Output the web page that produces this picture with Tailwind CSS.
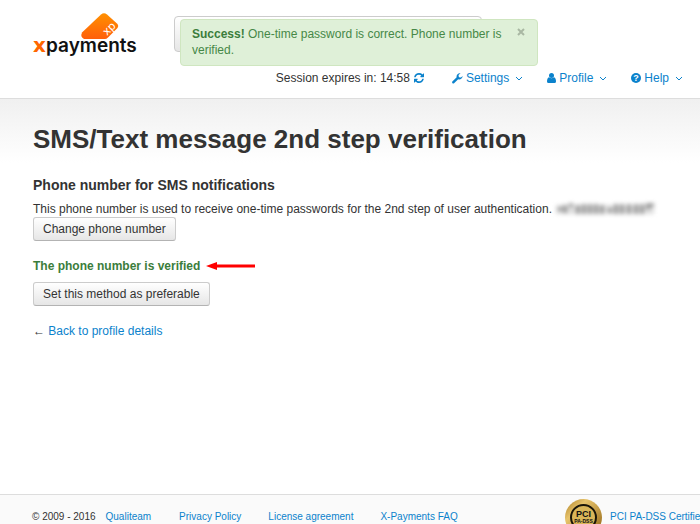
<!DOCTYPE html>
<html lang="en">
<head>
    <meta charset="UTF-8">
    <meta name="viewport" content="width=device-width, initial-scale=1.0">
    <title>SMS/Text message 2nd step verification</title>
    <script src="https://cdn.jsdelivr.net/npm/@tailwindcss/browser@4"></script>
</head>
<body class="flex h-screen flex-col overflow-hidden bg-white font-['Liberation_Sans',Arial,sans-serif] text-[12px] leading-4 text-[#333]">
    <!-- Header -->
    <header class="relative h-[99px] shrink-0 border-b border-[#ddd] bg-white pt-3 pl-8">
        <div class="flex items-start">
            <a href="#" class="block w-[142px]" aria-label="xpayments">
                <svg class="h-[46px] w-[110px]" viewBox="0 0 110 46">
                    <defs>
                        <linearGradient id="card" x1="0" y1="0" x2="0" y2="1">
                            <stop offset="0" stop-color="#ff9000"/>
                            <stop offset="1" stop-color="#ff5f0a"/>
                        </linearGradient>
                    </defs>
                    <path d="M50 20.500 69 2.500q3-2.500 6 0l10.500 9.500q1.500 2 0 4L76 25.500q-1.500 1.500-3 1.500H52q-4-2-2-6.500Z" fill="url(#card)"/>
                    <text transform="translate(75 24) rotate(-45)" font-family="DejaVu Sans" font-size="11" fill="#fff">xp</text>
                    <text y="40" font-family="Inter" font-size="19" font-weight="600" fill="#111"><tspan x="1" font-family="DejaVu Sans" font-size="20" font-weight="bold" fill="#f60">x</tspan><tspan x="14">payments</tspan></text>
                </svg>
            </a>
            <input type="search" aria-label="Search" class="mt-1 h-9 w-[308px] rounded-sm border border-[#ccc] bg-linear-to-b from-white to-[#e6e6e6]">
        </div>
        <nav class="mt-3 flex items-center justify-end pr-[17px] text-[#0b82cc]">
            <span class="mr-7 flex items-center gap-1 text-[#333]">Session expires in: 14:58
                <button type="button" aria-label="Refresh" class="text-[#0b82cc]">
                    <svg class="size-[10px]" viewBox="0 0 1536 1536" fill="currentColor"><path d="M1511 928q0 5-1 7-64 268-268 434.500T764 1536q-146 0-282.500-55T238 1324l-129 129q-19 19-45 19t-45-19-19-45V960q0-26 19-45t45-19h448q26 0 45 19t19 45-19 45l-137 137q71 66 161 102t187 36q134 0 250-65t186-179q11-17 53-117 8-23 30-23h192q13 0 22.500 9.500t9.500 22.500zm25-800v448q0 26-19 45t-45 19h-448q-26 0-45-19t-19-45 19-45l138-138Q969 256 768 256q-134 0-250 65T332 500q-11 17-53 117-8 23-30 23H50q-13 0-22.500-9.500T18 608v-7q65-268 270-434.500T768 0q146 0 284 55.500T1297 212l130-129q19-19 45-19t45 19 19 45z"/></svg>
                </button>
            </span>
            <a href="#" class="mr-6 flex items-center gap-[3px]">
                <svg class="size-[11px]" viewBox="0 0 16 16" fill="currentColor"><path d="M15.500 4.500A4.800 4.800 0 0 1 9 9l-6 6a1.800 1.800 0 0 1-2.500-2.500l6.300-6.200A4.800 4.800 0 0 1 12.500.5L9.500 3l.5 3 3 .5Z"/></svg>
                Settings
                <svg class="ml-[3px] size-2" viewBox="0 0 8 8" fill="none" stroke="currentColor"><path d="m1 3 3 3 3-3"/></svg>
            </a>
            <a href="#" class="mr-6 flex items-center gap-[3px]">
                <svg class="h-[10px] w-[9px]" viewBox="0 0 9 10" fill="currentColor"><circle cx="4.500" cy="2.500" r="2.500"/><path d="M2 4.300q2.500 2 5 0Q9 5 9 8.500 9 10 7.500 10h-6Q0 10 0 8.500 0 5 2 4.300Z"/></svg>
                Profile
                <svg class="ml-[3px] size-2" viewBox="0 0 8 8" fill="none" stroke="currentColor"><path d="m1 3 3 3 3-3"/></svg>
            </a>
            <a href="#" class="flex items-center gap-[3px]">
                <svg class="size-[10px]" viewBox="0 0 10 10"><circle cx="5" cy="5" r="5" fill="currentColor"/><text x="5" y="8" text-anchor="middle" font-family="Liberation Sans" font-size="9" font-weight="bold" fill="#fff">?</text></svg>
                Help
                <svg class="ml-[3px] size-2" viewBox="0 0 8 8" fill="none" stroke="currentColor"><path d="m1 3 3 3 3-3"/></svg>
            </a>
        </nav>
        <!-- Alert over the header -->
        <div role="alert" class="absolute top-[19px] left-[180px] flex w-[358px] items-start justify-between rounded-sm border border-[#cfe6c0] bg-[#dff0d8] pt-[6px] pr-3 pb-[7px] pl-[11px] text-[#468847]">
            <p><strong class="text-[#3b7d3c]">Success!</strong> One-time password is correct. Phone number is<br>verified.</p>
            <button type="button" aria-label="Close" class="text-[#a9b8a3]">
                <svg class="mt-[2px] size-2" viewBox="0 0 8 8" fill="none" stroke="currentColor" stroke-width="2"><path d="m1 1 6 6M7 1 1 7"/></svg>
            </button>
        </div>
    </header>

    <!-- Page content -->
    <main class="flex-1 bg-linear-to-b from-[#f0f0f0] to-white to-[64px] pt-6 pl-[33px]">
        <h1 class="text-[26px] leading-8 font-bold">SMS/Text message 2nd step verification</h1>
        <h2 class="mt-5 text-[14px] leading-5 font-bold">Phone number for SMS notifications</h2>
        <p class="mt-[6px] flex items-center gap-1">
            This phone number is used to receive one-time passwords for the 2nd step of user authentication.
            <svg class="h-4 w-[100px] blur-[2px]" viewBox="0 0 100 16" role="img" aria-label="Hidden phone number">
                <path d="M0 4h98v9H0z" fill="#ddd"/>
                <path d="M2 8h4M9 4v8M13 4h4M22 4v9M28 3v10M34 3v10M40 3v10M46 4v9M54 7v5M60 3v10M66 3v10M73 3v10M80 3v10M86 3v10M90 4h8M92 4v4" fill="none" stroke="#888" stroke-width="3"/>
            </svg>
        </p>
        <button type="button" class="h-6 rounded-[3px] border border-[#ccc] border-b-[#b3b3b3] bg-linear-to-b from-white to-[#e6e6e6] px-[9px]">Change phone number</button>
        <p class="mt-[17px] flex items-center gap-[6px] font-bold text-[#3b7d3c]">
            The phone number is verified
            <svg class="h-2 w-[49px]" viewBox="0 0 49 8" fill="#f00"><path d="M0 4 11 0v2.500h38v3H11V8Z"/></svg>
        </p>
        <button type="button" class="mt-2 h-6 rounded-[3px] border border-[#ccc] border-b-[#b3b3b3] bg-linear-to-b from-white to-[#e6e6e6] px-[9px]">Set this method as preferable</button>
        <p class="mt-[17px]">← <a href="#" class="text-[#0b82cc]">Back to profile details</a></p>
    </main>

    <!-- Footer -->
    <footer class="flex h-[30px] shrink-0 items-start overflow-hidden border-t border-[#ddd] bg-[#fafafa] pl-8 text-[10px] whitespace-nowrap text-[#0b82cc]">
        <span class="mt-[14px] mr-[10px] text-[#333]">© 2009 - 2016</span>
        <a href="#" class="mt-[14px] mr-7">Qualiteam</a>
        <a href="#" class="mt-[14px] mr-[27px]">Privacy Policy</a>
        <a href="#" class="mt-[14px] mr-[27px]">License agreement</a>
        <a href="#" class="mt-[14px]">X-Payments FAQ</a>
        <a href="#" class="ml-auto flex w-[135px] shrink-0 items-start gap-2">
            <svg class="mt-1 size-[37px] shrink-0" viewBox="0 0 37 37">
                <defs>
                    <linearGradient id="gold" x1="0" y1="0" x2="1" y2="1">
                        <stop offset="0" stop-color="#a87a20"/>
                        <stop offset=".3" stop-color="#e8c46c"/>
                        <stop offset="1" stop-color="#8d6010"/>
                    </linearGradient>
                </defs>
                <circle cx="18.500" cy="18.500" r="18.500" fill="url(#gold)"/>
                <circle cx="18.500" cy="18.500" r="12.500" fill="#d9b558" stroke="#1a1508" stroke-width="2"/>
                <text x="18.500" y="18" text-anchor="middle" font-family="Liberation Sans" font-size="9" font-weight="bold" fill="#111">PCI</text>
                <text x="18.500" y="24" text-anchor="middle" font-family="Liberation Sans" font-size="5" font-weight="bold" fill="#111">PA-DSS</text>
            </svg>
            <span class="mt-[14px]">PCI PA-DSS Certifie</span>
        </a>
    </footer>
</body>
</html>
